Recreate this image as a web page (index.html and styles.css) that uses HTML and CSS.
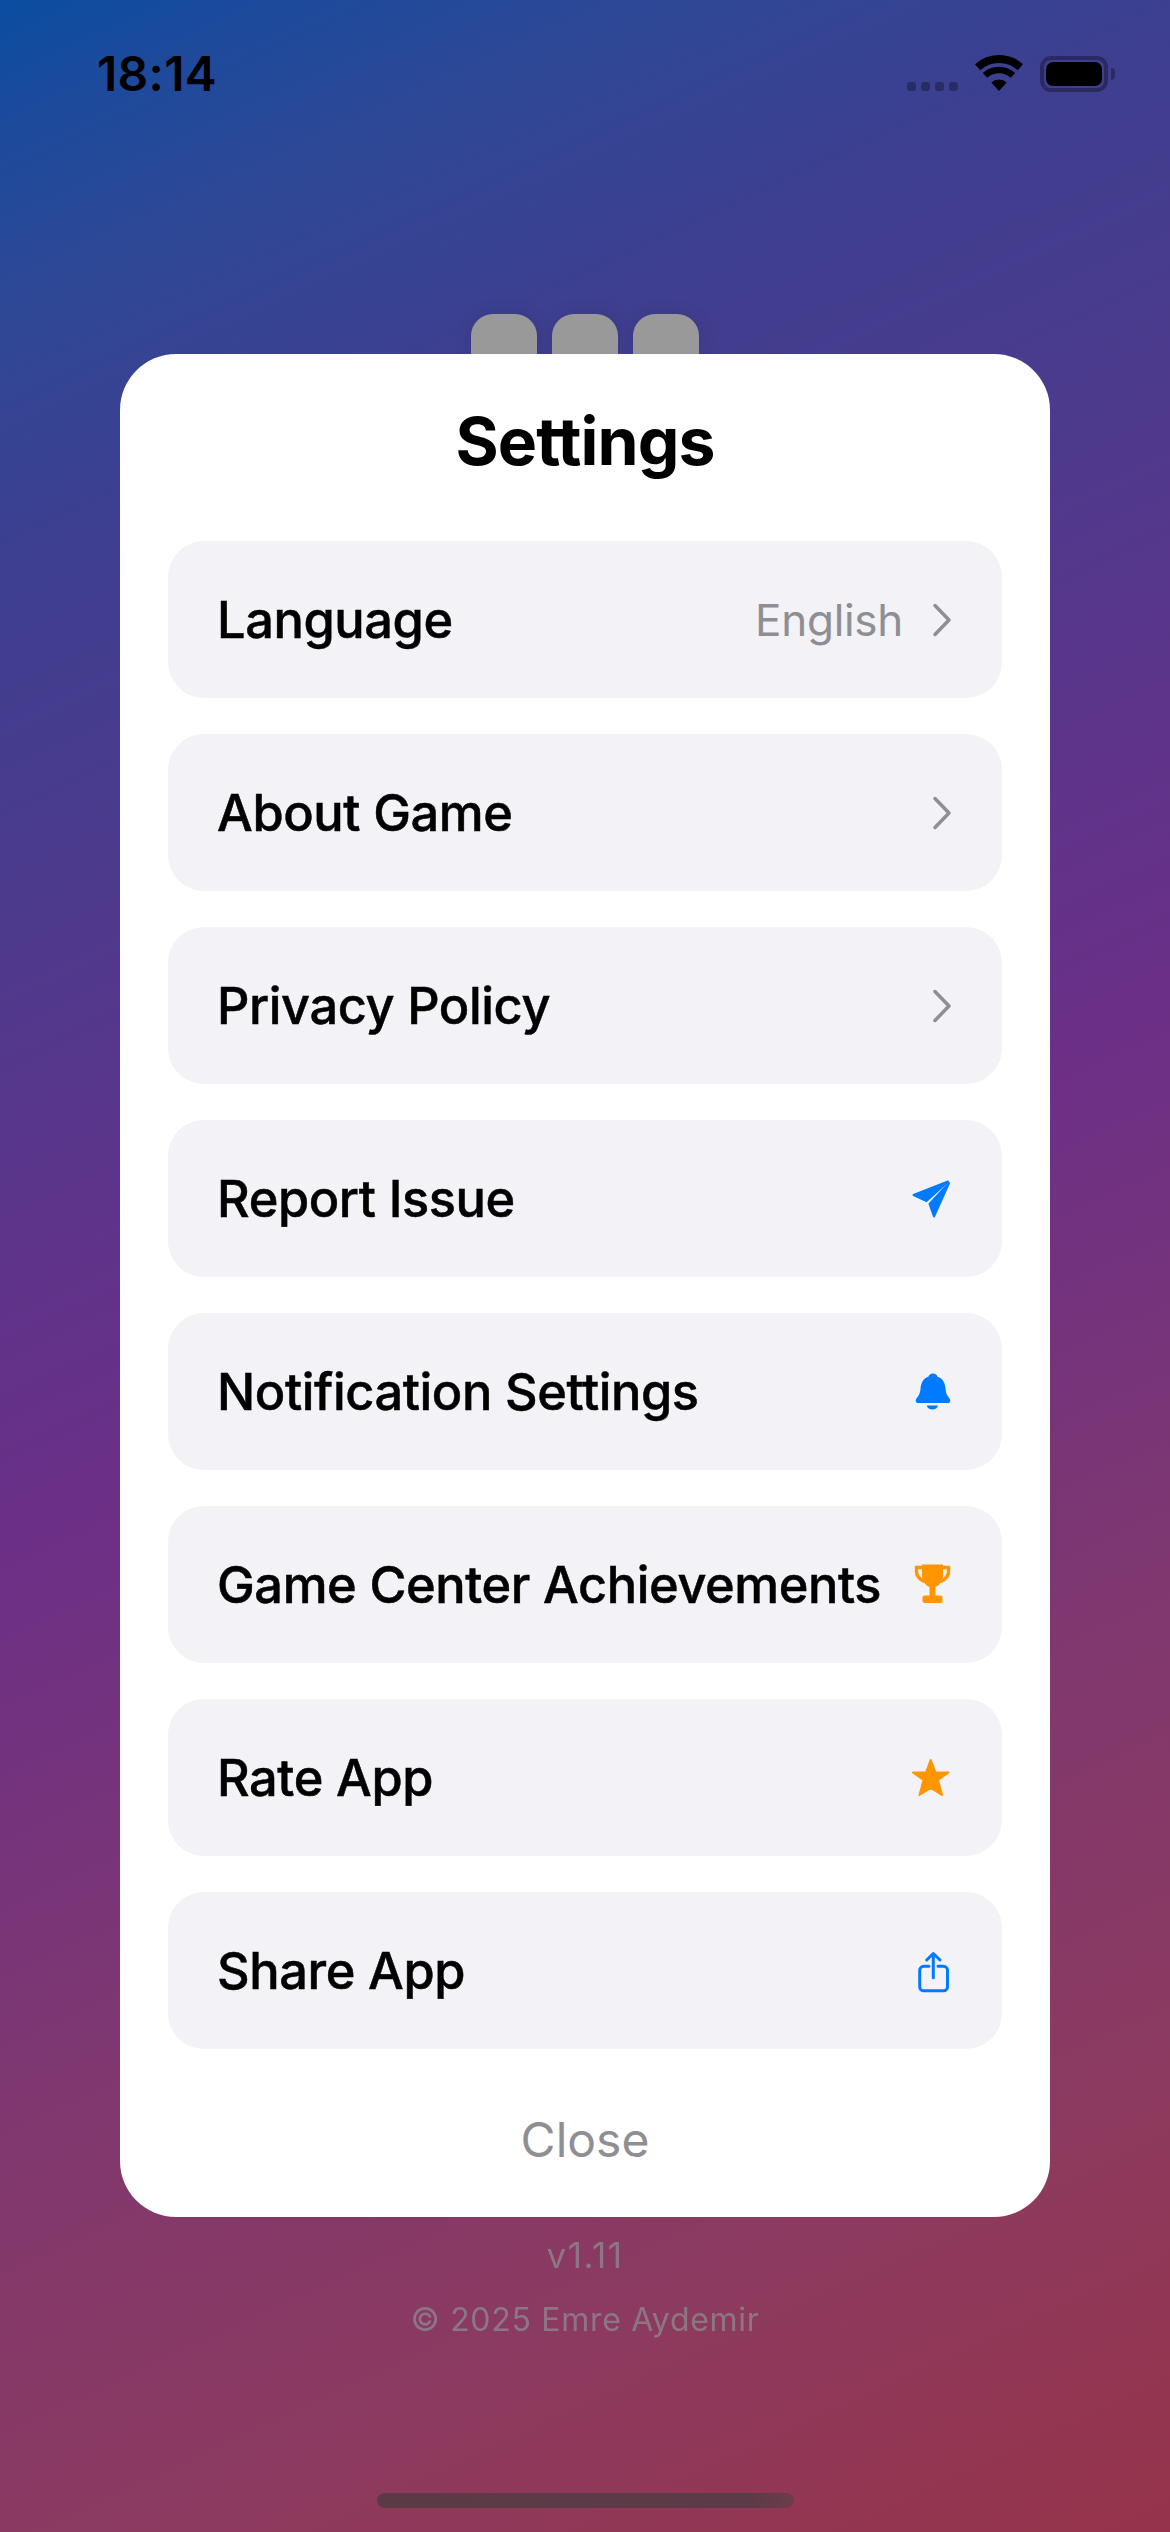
FILE: index.html
```html
<!DOCTYPE html>
<html lang="en">
<head>
<meta charset="utf-8">
<title>Settings</title>
<link rel="stylesheet" href="styles.css">
</head>
<body>
<div class="screen">
  <header class="status">
    <span class="time">18:14</span>
    <div class="status-icons">
      <div class="signal"><i></i><i></i><i></i><i></i></div>
      <svg class="wifi" viewBox="0 0 48 36" width="48" height="36">
        <path class="wifi-band" stroke-width="8" d="M2.6 12.2A32 32 0 0 1 45.4 12.2"/>
        <path class="wifi-band" stroke-width="6.5" d="M9.95 20.4A21 21 0 0 1 38.05 20.4"/>
        <path d="M24 36L16.3 27.45A11.5 11.5 0 0 1 31.7 27.45Z"/>
      </svg>
      <div class="battery"><div class="battery-level"></div></div>
      <div class="battery-cap"></div>
    </div>
  </header>

  <div class="tabs"><span></span><span></span><span></span></div>

  <main class="card">
    <h1 class="title">Settings</h1>
    <ul class="rows">
      <li class="row">
        <span class="label">Language</span>
        <span class="value">English</span>
        <svg class="icon" viewBox="0 0 44 44"><path class="chevron" d="M27 7.5L41 22L27 36.5"/></svg>
      </li>
      <li class="row">
        <span class="label">About Game</span>
        <svg class="icon" viewBox="0 0 44 44"><path class="chevron" d="M27 7.5L41 22L27 36.5"/></svg>
      </li>
      <li class="row">
        <span class="label">Privacy Policy</span>
        <svg class="icon" viewBox="0 0 44 44"><path class="chevron" d="M27 7.5L41 22L27 36.5"/></svg>
      </li>
      <li class="row">
        <span class="label">Report Issue</span>
        <svg class="icon blue" viewBox="0 0 44 44">
          <path class="rounded" d="M5.5 18L40 4.5L18.5 24Z"/>
          <path class="rounded" d="M41 6L26 39.5L21.5 27Z"/>
        </svg>
      </li>
      <li class="row">
        <span class="label">Notification Settings</span>
        <svg class="icon blue" viewBox="0 0 44 44">
          <path d="M25 3.5c2.5 0 4 1.5 4.6 3.2C35 8.5 37 13 37.5 19c.4 4 1.5 6.5 4 9.5 1.5 1.8.8 4.5-1.5 4.5H10c-2.3 0-3-2.7-1.5-4.5 2.5-3 3.6-5.5 4-9.5C13 13 15 8.5 20.4 6.7 21 5 22.5 3.5 25 3.5z"/>
          <path d="M18.7 35.5H30c-.5 2.5-3 4-5.6 4s-5.2-1.5-5.7-4z"/>
        </svg>
      </li>
      <li class="row">
        <span class="label">Game Center Achievements</span>
        <svg class="icon orange" viewBox="0 0 44 44">
          <path d="M14 1.5h21v11c0 6-4 10-7.500 11.500v9h-6v-9C18 22.500 14 18.500 14 12.500z"/>
          <path class="handle" d="M14 4.500H8.500v4c0 5 3 8 8 10"/>
          <path class="handle" d="M35 4.500h5.500v4c0 5-3 8-8 10"/>
          <rect x="14.500" y="32.500" width="20" height="7.500" rx="2"/>
        </svg>
      </li>
      <li class="row">
        <span class="label">Rate App</span>
        <svg class="icon orange" viewBox="0 0 44 44">
          <path class="rounded" d="M22.700 4L27.500 16.500H40.500L30 24L34 39L22.700 32L11.500 39L15.500 24L5 16.500H18Z"/>
        </svg>
      </li>
      <li class="row">
        <span class="label">Share App</span>
        <svg class="icon blue" viewBox="0 0 44 44">
          <path class="share" d="M21 17.300H15.700a4 4 0 0 0-4 4V37.800a4 4 0 0 0 4 4H35.500a4 4 0 0 0 4-4V21.300a4 4 0 0 0-4-4H30"/>
          <path class="share" d="M25.300 28.800V5M18.700 11L25.300 4.500L32 11"/>
        </svg>
      </li>
    </ul>
    <div class="close">Close</div>
  </main>

  <footer class="credits">
    <p class="version">v1.11</p>
    <p class="copyright">© 2025 Emre Aydemir</p>
  </footer>

  <div class="home-bar"></div>
</div>
</body>
</html>
```

FILE: styles.css
```css
* {
  box-sizing: border-box;
}

html,
body {
  margin: 0;
  padding: 0;
}

body {
  font-family: Inter, "Liberation Sans", sans-serif;
  color: #000;
}

.screen {
  width: 1170px;
  height: 2532px;
  overflow: hidden;
  display: flex;
  flex-direction: column;
  align-items: center;
  background: linear-gradient(
    155.2deg,
    #0a4da0 0%,
    #1c4a9c 4%,
    #2e4896 10%,
    #3d3f90 18%,
    #4d3a8d 30%,
    #6b2f87 50%,
    #80386e 70%,
    #8d3a5e 86%,
    #96334a 100%
  );
}

/* Status bar */
.status {
  width: 100%;
  height: 100px;
  padding: 0 55px 0 97px;
  display: flex;
  justify-content: space-between;
  align-items: flex-start;
}

.time {
  margin-top: 51px;
  font-size: 48px;
  line-height: 46px;
  font-weight: 600;
  letter-spacing: 0.3px;
}

.status-icons {
  margin-top: 55px;
  display: flex;
  align-items: flex-end;
}

.signal {
  display: flex;
  gap: 5px;
  margin-right: 17px;
}

.signal i {
  width: 9px;
  height: 9px;
  border-radius: 3px;
  background: rgba(0, 0, 0, 0.3);
}

.wifi {
  display: block;
  margin-right: 17px;
}

.wifi-band {
  fill: none;
  stroke: #000;
}

.battery {
  width: 68px;
  height: 36px;
  padding: 2px;
  border: 4px solid rgba(0, 0, 0, 0.32);
  border-radius: 11px;
  margin-bottom: -1px;
}

.battery-level {
  width: 100%;
  height: 100%;
  border-radius: 7px;
  background: #000;
}

.battery-cap {
  width: 4px;
  height: 12px;
  margin: 0 0 11px 3px;
  border-radius: 0 6px 6px 0;
  background: rgba(0, 0, 0, 0.32);
}

/* Tabs peeking out from behind the card */
.tabs {
  margin-top: 214px;
  height: 40px;
  display: flex;
  gap: 15px;
  filter: drop-shadow(0 0 8px rgba(0, 0, 0, 0.1));
}

.tabs span {
  width: 66px;
  height: 40px;
  border-radius: 22px 22px 0 0;
  background: #999;
}

/* Settings card */
.card {
  width: 930px;
  height: 1863px;
  padding: 0 48px;
  border-radius: 56px;
  background: #fff;
  position: relative;
}

.title {
  margin: 0;
  height: 187px;
  padding-top: 52px;
  text-align: center;
  font-size: 66px;
  line-height: 70px;
  font-weight: 700;
  letter-spacing: -0.9px;
}

.rows {
  list-style: none;
  margin: 0;
  padding: 0;
  display: flex;
  flex-direction: column;
  gap: 36px;
}

.row {
  height: 157px;
  padding: 0 50px 0 49px;
  display: flex;
  align-items: center;
  border-radius: 36px;
  background: #f2f2f7;
}

.label {
  flex: 1;
  font-size: 50.5px;
  font-weight: 500;
  letter-spacing: -0.4px;
  -webkit-text-stroke: 0.5px #000;
  white-space: nowrap;
}

.value {
  margin-right: 5px;
  font-size: 44px;
  letter-spacing: -0.3px;
  color: #8e8e93;
}

/* Trailing icons */
.icon {
  display: block;
  flex: none;
  width: 44px;
  height: 44px;
}

.chevron {
  fill: none;
  stroke: #8e8e93;
  stroke-width: 3.5;
  stroke-linecap: round;
  stroke-linejoin: round;
}

.blue {
  color: #007aff;
  fill: currentColor;
}

.orange {
  color: #ff9500;
  fill: currentColor;
}

.rounded {
  stroke: currentColor;
  stroke-width: 2;
  stroke-linejoin: round;
}

.handle {
  fill: none;
  stroke: currentColor;
  stroke-width: 3.4;
}

.share {
  fill: none;
  stroke: currentColor;
  stroke-width: 3;
  stroke-linecap: round;
  stroke-linejoin: round;
}

.close {
  padding-top: 64px;
  text-align: center;
  font-size: 48px;
  line-height: 54px;
  color: #8e8e93;
}

/* Version and copyright under the card */
.credits {
  margin-top: 16px;
  text-align: center;
  color: #8e8e93;
  opacity: 0.72;
}

.version {
  margin: 0 0 21px;
  font-size: 35px;
  line-height: 44px;
  letter-spacing: 1.5px;
}

.copyright {
  margin: 0;
  font-size: 32px;
  line-height: 44px;
  letter-spacing: 0.7px;
}

.home-bar {
  margin-top: auto;
  margin-bottom: 24px;
  width: 417px;
  height: 15px;
  border-radius: 8px;
  background: linear-gradient(90deg, #5b3a46 0%, #5d3a47 90%, #6f3c4c 100%);
}
```
